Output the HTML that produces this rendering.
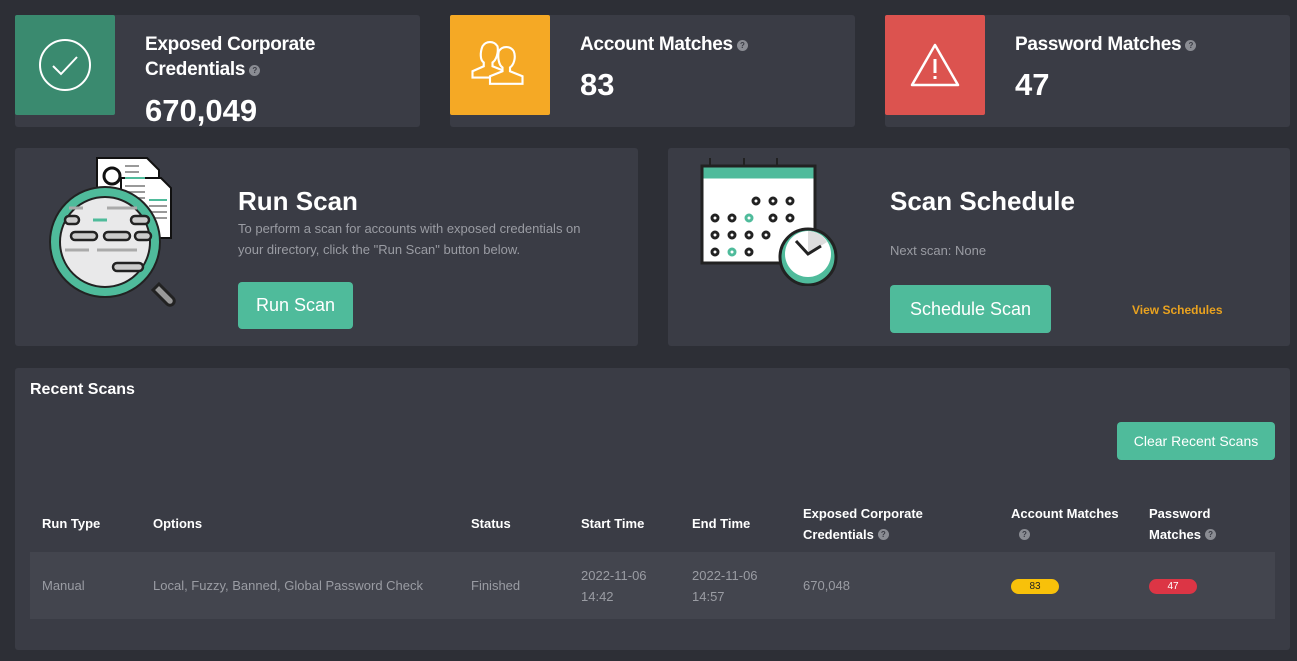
<!DOCTYPE html>
<html><head><meta charset="utf-8"><style>
*{box-sizing:border-box;margin:0;padding:0}
body{width:1297px;height:661px;background:#2d2f36;font-family:"Liberation Sans",sans-serif;color:#fff;position:relative;overflow:hidden}
.card{position:absolute;background:#3a3c45;border-radius:3px}
.ib{position:absolute;left:0;top:0;width:100px;height:100px;border-radius:2px;display:flex;align-items:center;justify-content:center}
.t{position:absolute;font-weight:bold;font-size:19px;line-height:25px;letter-spacing:-0.3px}
.n{position:absolute;font-weight:bold;font-size:31px}
.q{display:inline-block;width:11px;height:11px;border-radius:50%;background:#8a8c93;color:#3a3c45;font-size:8px;line-height:11px;text-align:center;vertical-align:2px;margin-left:4px}
.btn{position:absolute;background:#4fbb9b;color:#fff;border-radius:4px;display:flex;align-items:center;justify-content:center}
th{font-size:13px;font-weight:bold;text-align:left;vertical-align:middle;color:#fff}
td{font-size:13px;color:#9a9ca3}
.badge{display:inline-block;width:48px;height:15px;border-radius:8px;font-size:10px;text-align:center;line-height:15px}
</style></head><body>

<div class="card" style="left:15px;top:15px;width:405px;height:112px">
 <div class="ib" style="background:#3a8a6f"><svg width="54" height="54" viewBox="0 0 54 54"><circle cx="27" cy="27" r="25" fill="none" stroke="#fff" stroke-width="2"/><path d="M15 28l8 8 16-17" fill="none" stroke="#fff" stroke-width="2"/></svg></div>
 <div class="t" style="left:130px;top:17px">Exposed Corporate<br>Credentials<span class="q">?</span></div>
 <div class="n" style="left:130px;top:78px">670,049</div>
</div>
<div class="card" style="left:450px;top:15px;width:405px;height:112px">
 <div class="ib" style="background:#f5a925"><svg width="60" height="50" viewBox="0 0 48 40"><g fill="none" stroke="#fff" stroke-width="1.7"><path d="M10 5a7 7 0 0 1 12 0c1 5-1 11-4 13v3l10 4v5H2v-5l9-4v-3c-3-2-3-8-1-13z"/><path d="M23 9a7 7 0 0 1 12 0c2 5 0 11-3 13v3l10 4v6H16v-6l10-4v-3c-3-2-4-8-3-13z" fill="#f5a925"/></g></svg></div>
 <div class="t" style="left:130px;top:17px">Account Matches<span class="q">?</span></div>
 <div class="n" style="left:130px;top:52px">83</div>
</div>
<div class="card" style="left:885px;top:15px;width:405px;height:112px">
 <div class="ib" style="background:#dc534f"><svg width="52" height="46" viewBox="0 0 52 46"><path d="M26 3L49 43H3z" fill="none" stroke="#fff" stroke-width="2.5" stroke-linejoin="round"/><rect x="24.5" y="17" width="3" height="14" fill="#fff"/><rect x="24.5" y="34" width="3" height="3" fill="#fff"/></svg></div>
 <div class="t" style="left:130px;top:17px">Password Matches<span class="q">?</span></div>
 <div class="n" style="left:130px;top:52px">47</div>
</div>

<div class="card" style="left:15px;top:148px;width:623px;height:198px">
 <svg style="position:absolute;left:34px;top:8px" width="160" height="165" viewBox="0 0 160 165">
  <path d="M48 2h50l12 12v58H48z" fill="#fff" stroke="#111" stroke-width="2"/>
  <path d="M72 22h40l10 10v50H72z" fill="#fff" stroke="#111" stroke-width="2"/>
  <circle cx="63" cy="20" r="8" fill="#fff" stroke="#111" stroke-width="3"/>
  <g stroke="#999" stroke-width="2"><path d="M76 10h14M76 16h14M76 30h20M76 36h20M76 42h20M100 50h18M100 56h18M100 62h18"/></g>
  <path d="M76 22h20M100 44h18" stroke="#4fbb9b" stroke-width="2"/>
  <path d="M110 128l14 14a4 4 0 0 1 -6 6l-14 -14z" fill="#999" stroke="#222" stroke-width="3"/>
  <circle cx="56" cy="86" r="50" fill="#e9e9ea" stroke="#4fbb9b" stroke-width="9"/>
  <circle cx="56" cy="86" r="55" fill="none" stroke="#222" stroke-width="2"/>
  <circle cx="56" cy="86" r="45" fill="none" stroke="#222" stroke-width="2"/>
  <g fill="#ccc" stroke="#222" stroke-width="2.5"><rect x="22" y="76" width="26" height="8" rx="4"/><rect x="55" y="76" width="26" height="8" rx="4"/><rect x="86" y="76" width="16" height="8" rx="4"/><rect x="16" y="60" width="14" height="8" rx="4"/><rect x="82" y="60" width="18" height="8" rx="4"/><rect x="64" y="107" width="30" height="8" rx="4"/></g>
  <path d="M44 64h14" stroke="#4fbb9b" stroke-width="3"/>
  <path d="M20 52h14M58 52h30M16 94h24M48 94h40" stroke="#aaa" stroke-width="3"/>
 </svg>
 <div style="position:absolute;left:223px;top:38px;font-size:26px;font-weight:bold">Run Scan</div>
 <div style="position:absolute;left:223px;top:70px;width:370px;font-size:13px;line-height:21px;color:#9a9ca3">To perform a scan for accounts with exposed credentials on your directory, click the "Run Scan" button below.</div>
 <div class="btn" style="left:223px;top:134px;width:115px;height:47px;font-size:18px">Run Scan</div>
</div>

<div class="card" style="left:668px;top:148px;width:622px;height:198px">
 <svg style="position:absolute;left:32px;top:8px" width="145" height="130" viewBox="0 0 145 130">
  <path d="M10 2v10M44 2v10M77 2v10" stroke="#222" stroke-width="2"/>
  <rect x="2" y="10" width="113" height="97" fill="#fff" stroke="#222" stroke-width="3"/>
  <rect x="3.5" y="11.5" width="110" height="11" fill="#4fbb9b"/>
  <g fill="none" stroke="#222" stroke-width="3">
   <circle cx="56" cy="45" r="3"/><circle cx="73" cy="45" r="3"/><circle cx="90" cy="45" r="3"/>
   <circle cx="15" cy="62" r="3"/><circle cx="32" cy="62" r="3"/><circle cx="73" cy="62" r="3"/><circle cx="90" cy="62" r="3"/>
   <circle cx="15" cy="79" r="3"/><circle cx="32" cy="79" r="3"/><circle cx="49" cy="79" r="3"/><circle cx="66" cy="79" r="3"/>
   <circle cx="15" cy="96" r="3"/><circle cx="49" cy="96" r="3"/></g>
  <g fill="none" stroke="#4fbb9b" stroke-width="3"><circle cx="49" cy="62" r="3"/><circle cx="32" cy="96" r="3"/></g>
  <circle cx="108" cy="101" r="28" fill="#4fbb9b" stroke="#222" stroke-width="3"/>
  <circle cx="108" cy="98" r="23" fill="#fff"/>
  <path d="M108 98L108 75A23 23 0 0 1 127 86z" fill="#ddd"/>
  <path d="M96 85l12 13 13-8" fill="none" stroke="#222" stroke-width="3"/>
 </svg>
 <div style="position:absolute;left:222px;top:38px;font-size:26px;font-weight:bold">Scan Schedule</div>
 <div style="position:absolute;left:222px;top:95px;font-size:13px;color:#9a9ca3">Next scan: None</div>
 <div class="btn" style="left:222px;top:137px;width:161px;height:48px;font-size:18px">Schedule Scan</div>
 <div style="position:absolute;left:464px;top:155px;font-size:12px;font-weight:bold;color:#e9a21f">View Schedules</div>
</div>

<div class="card" style="left:15px;top:368px;width:1275px;height:282px">
 <div style="position:absolute;left:15px;top:13px;font-size:16px;font-weight:bold">Recent Scans</div>
 <div class="btn" style="left:1102px;top:54px;width:158px;height:38px;font-size:14px">Clear Recent Scans</div>
 <table style="position:absolute;left:15px;top:127px;width:1245px;border-collapse:collapse;table-layout:fixed">
  <tr style="height:57px"><th style="padding-left:12px;width:123px">Run Type</th><th style="width:318px">Options</th><th style="width:110px">Status</th><th style="width:111px">Start Time</th><th style="width:111px">End Time</th><th style="width:208px;line-height:21px">Exposed Corporate<br>Credentials<span class="q">?</span></th><th style="width:138px;line-height:21px">Account Matches<br><span class="q" style="margin-left:8px">?</span></th><th style="line-height:21px">Password<br>Matches<span class="q">?</span></th></tr>
  <tr style="height:67px;background:#43454e"><td style="padding-left:12px">Manual</td><td>Local, Fuzzy, Banned, Global Password Check</td><td>Finished</td><td style="line-height:21px">2022-11-06<br>14:42</td><td style="line-height:21px">2022-11-06<br>14:57</td><td>670,048</td><td><span class="badge" style="background:#f8c10a;color:#222">83</span></td><td><span class="badge" style="background:#dc3545;color:#fff">47</span></td></tr>
 </table>
</div>
</body></html>
